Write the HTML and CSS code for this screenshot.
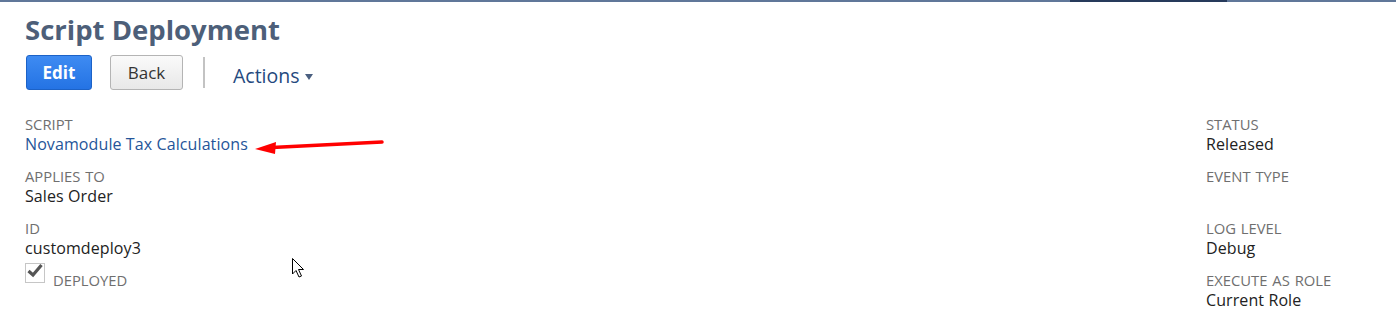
FILE: index.html
```html
<!DOCTYPE html>
<html>
<head>
<meta charset="utf-8">
<link rel="stylesheet" href="styles.css">
</head>
<body>
<div class="topbar"><div class="topbar-active"></div></div>
<div class="page">
  <h1 class="title">Script Deployment</h1>
  <div class="toolbar">
    <button class="btn btn-primary">Edit</button>
    <button class="btn btn-secondary">Back</button>
    <span class="divider"></span>
    <span class="actions">Actions<span class="caret"></span></span>
  </div>
  <div class="fields">
    <div class="col">
      <div class="field">
        <div class="label">SCRIPT</div>
        <div class="value link">Novamodule Tax Calculations</div>
      </div>
      <div class="field">
        <div class="label">APPLIES TO</div>
        <div class="value">Sales Order</div>
      </div>
      <div class="field">
        <div class="label">ID</div>
        <div class="value">customdeploy3</div>
      </div>
      <div class="check-row">
        <span class="checkbox">
          <svg width="18" height="16" viewBox="0 0 18 16"><path d="M2.5 8 L7 12 L15.5 2" fill="none" stroke="#555" stroke-width="3.2"/></svg>
        </span>
        <span class="label check-label">DEPLOYED</span>
      </div>
    </div>
    <div class="col col-right">
      <div class="field">
        <div class="label">STATUS</div>
        <div class="value">Released</div>
      </div>
      <div class="field">
        <div class="label">EVENT TYPE</div>
        <div class="value">&nbsp;</div>
      </div>
      <div class="field">
        <div class="label">LOG LEVEL</div>
        <div class="value">Debug</div>
      </div>
      <div class="field">
        <div class="label">EXECUTE AS ROLE</div>
        <div class="value">Current Role</div>
      </div>
    </div>
  </div>
</div>
<svg class="arrow" width="140" height="20" viewBox="0 0 140 20">
  <line x1="128" y1="3" x2="18" y2="8.5" stroke="#ff0000" stroke-width="3.5" stroke-linecap="round"/>
  <polygon points="1,10 22,3 21,15" fill="#ff0000"/>
</svg>
<svg class="cursor" width="16" height="24" viewBox="0 0 16 24">
  <path d="M1.5 1.5 L1.5 17 L5 13.5 L8 20 L10.5 19 L7.5 12.5 L12.5 12.5 Z" fill="#fff" stroke="#000" stroke-width="1"/>
</svg>
</body>
</html>
```
FILE: styles.css
```css
* { box-sizing: border-box; }
html, body { margin: 0; padding: 0; background: #fff; }
body {
  font-family: "Open Sans", "Liberation Sans", sans-serif;
  width: 1396px;
  height: 327px;
  overflow: hidden;
  position: relative;
}
.topbar {
  height: 2px;
  background: #607799;
  position: relative;
}
.topbar-active {
  position: absolute;
  left: 1070px;
  width: 157px;
  top: 0;
  height: 2px;
  background: #263a5b;
}
.page {
  padding-left: 25px;
}
.title {
  margin: 0;
  padding-top: 11px;
  font-size: 27.5px;
  line-height: 34px;
  font-weight: 700;
  color: #4d5f79;
  letter-spacing: 0;
}
.toolbar {
  display: flex;
  align-items: center;
  margin-top: 8px;
  height: 35px;
}
.btn {
  font-family: "Open Sans", "Liberation Sans", sans-serif;
  font-size: 17px;
  height: 35px;
  border-radius: 3px;
  padding: 0;
  cursor: pointer;
}
.btn-primary {
  width: 66px;
  margin-left: 1px;
  color: #fff;
  font-weight: 700;
  background: linear-gradient(#3e8bf2, #2473e4);
  border: 1px solid #1c62c7;
}
.btn-secondary {
  width: 73px;
  margin-left: 18px;
  color: #333;
  font-weight: 400;
  background: linear-gradient(#fafafa, #e8e8e8);
  border: 1px solid #b4b4b4;
}
.divider {
  width: 2px;
  height: 31px;
  background: #c3c3c3;
  margin-left: 20px;
}
.actions {
  margin-left: 28px;
  margin-top: 6px;
  font-size: 19.5px;
  color: #24497e;
  display: flex;
  align-items: center;
}
.caret {
  display: inline-block;
  width: 0;
  height: 0;
  margin-left: 5px;
  margin-top: 3px;
  border-left: 4.5px solid transparent;
  border-right: 4.5px solid transparent;
  border-top: 6px solid #4a5f80;
}
.fields {
  display: flex;
  justify-content: space-between;
  margin-top: 25px;
}
.col {
  display: flex;
  flex-direction: column;
}
.col-right {
  width: 190px;
}
.field {
  height: 52px;
}
.label {
  font-size: 14.8px;
  line-height: 18px;
  word-spacing: 1px;
  color: #6f6f6f;
  text-transform: uppercase;
}
.value {
  font-size: 16px;
  line-height: 22px;
  letter-spacing: 0.1px;
  color: #222;
}
.link {
  color: #255599;
}
.check-row {
  display: flex;
  align-items: flex-start;
  margin-top: -8px;
}
.checkbox {
  width: 20px;
  height: 20px;
  border: 1px solid #c6c6c6;
  display: flex;
  align-items: flex-start;
  justify-content: center;
  background: #fff;
}
.checkbox svg {
  margin-top: -1px;
}
.check-label {
  margin-left: 8px;
  margin-top: 8px;
}
.arrow {
  position: absolute;
  left: 254px;
  top: 139px;
}
.cursor {
  position: absolute;
  left: 291px;
  top: 257px;
}
```
